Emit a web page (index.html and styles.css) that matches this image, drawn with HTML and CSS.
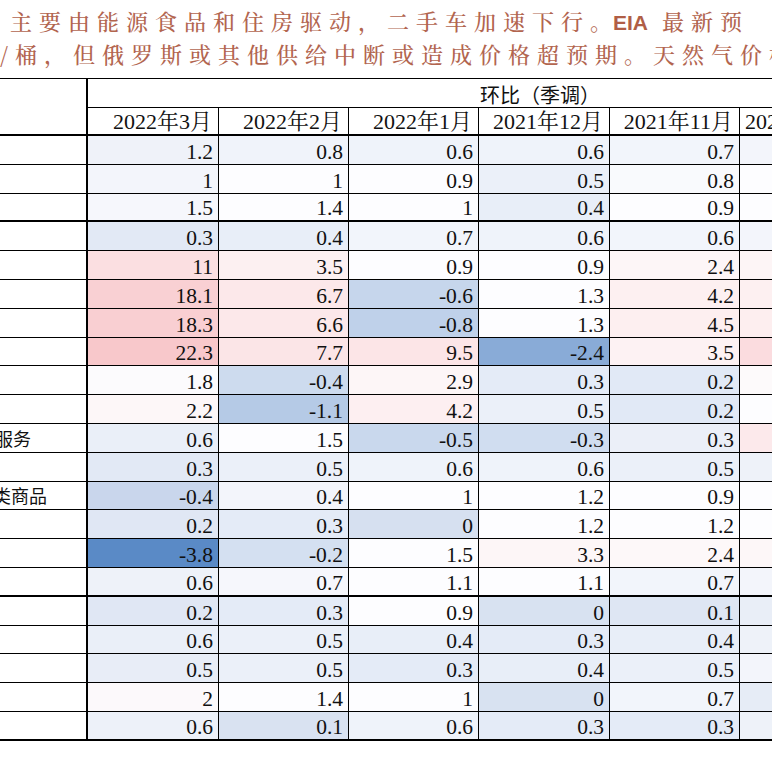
FILE: index.html
```html
<!DOCTYPE html>
<html lang="zh-CN">
<head>
<meta charset="utf-8">
<title>CPI 环比（季调）</title>
<link rel="stylesheet" href="styles.css">
</head>
<body>
<div class="title">
  <div class="l1">主要由能源食品和住房驱动，二手车加速下行。<span class="eia">EIA</span>最新预</div>
  <div class="l2">/桶，但俄罗斯或其他供给中断或造成价格超预期。天然气价格</div>
</div>
<div class="sheet">
  <div class="grid">
    <div class="row">
      <div class="c lab corner"></div>
      <div class="c hd span">环比（季调）</div>
    </div>
    <div class="row thick">
      <div class="c hd">2022年3月</div>
      <div class="c hd">2022年2月</div>
      <div class="c hd">2022年1月</div>
      <div class="c hd">2021年12月</div>
      <div class="c hd">2021年11月</div>
      <div class="c hd">2021年10月</div>
    </div>

    <div class="row">
      <div class="c lab"></div>
      <div class="c" style="background:#eff2f9">1.2</div>
      <div class="c" style="background:#f0f3fa">0.8</div>
      <div class="c" style="background:#eff3fa">0.6</div>
      <div class="c" style="background:#eff3fa">0.6</div>
      <div class="c" style="background:#f2f5fb">0.7</div>
      <div class="c" style="background:#f3f5fb"></div>
    </div>
    <div class="row">
      <div class="c lab"></div>
      <div class="c" style="background:#f3f5fb">1</div>
      <div class="c" style="background:#fdfdff">1</div>
      <div class="c" style="background:#fdfdff">0.9</div>
      <div class="c" style="background:#ebf0f9">0.5</div>
      <div class="c" style="background:#f9fafd">0.8</div>
      <div class="c" style="background:#fdfdff"></div>
    </div>
    <div class="row thick">
      <div class="c lab"></div>
      <div class="c" style="background:#f6f7fc">1.5</div>
      <div class="c" style="background:#fdfdff">1.4</div>
      <div class="c" style="background:#fdfdff">1</div>
      <div class="c" style="background:#e8eef8">0.4</div>
      <div class="c" style="background:#fdfdff">0.9</div>
      <div class="c" style="background:#fdfdff"></div>
    </div>
    <div class="row">
      <div class="c lab"></div>
      <div class="c" style="background:#e2e9f5">0.3</div>
      <div class="c" style="background:#e8eef8">0.4</div>
      <div class="c" style="background:#f2f5fb">0.7</div>
      <div class="c" style="background:#eff3fa">0.6</div>
      <div class="c" style="background:#f2f5fb">0.6</div>
      <div class="c" style="background:#f3f5fb"></div>
    </div>
    <div class="row">
      <div class="c lab"></div>
      <div class="c" style="background:#fbdfe1">11</div>
      <div class="c" style="background:#fcf0f1">3.5</div>
      <div class="c" style="background:#fdfdff">0.9</div>
      <div class="c" style="background:#fdfdff">0.9</div>
      <div class="c" style="background:#fdf6f7">2.4</div>
      <div class="c" style="background:#fdf5f6"></div>
    </div>
    <div class="row">
      <div class="c lab"></div>
      <div class="c" style="background:#f9d0d3">18.1</div>
      <div class="c" style="background:#fce8ea">6.7</div>
      <div class="c" style="background:#c6d6ec">-0.6</div>
      <div class="c" style="background:#fdfdff">1.3</div>
      <div class="c" style="background:#fdf0f1">4.2</div>
      <div class="c" style="background:#fdf0f1"></div>
    </div>
    <div class="row">
      <div class="c lab"></div>
      <div class="c" style="background:#f9cfd2">18.3</div>
      <div class="c" style="background:#fce8ea">6.6</div>
      <div class="c" style="background:#bfd1ea">-0.8</div>
      <div class="c" style="background:#fdfdff">1.3</div>
      <div class="c" style="background:#fdeff0">4.5</div>
      <div class="c" style="background:#fdeeef"></div>
    </div>
    <div class="row">
      <div class="c lab"></div>
      <div class="c" style="background:#f8c8cb">22.3</div>
      <div class="c" style="background:#fbe5e7">7.7</div>
      <div class="c" style="background:#fce5e7">9.5</div>
      <div class="c" style="background:#89abd7">-2.4</div>
      <div class="c" style="background:#fdf2f3">3.5</div>
      <div class="c" style="background:#fbdcdf"></div>
    </div>
    <div class="row">
      <div class="c lab"></div>
      <div class="c" style="background:#fcfbfd">1.8</div>
      <div class="c" style="background:#cddbee">-0.4</div>
      <div class="c" style="background:#fdf6f7">2.9</div>
      <div class="c" style="background:#e4ebf7">0.3</div>
      <div class="c" style="background:#e1e9f6">0.2</div>
      <div class="c" style="background:#fdfafb"></div>
    </div>
    <div class="row">
      <div class="c lab"></div>
      <div class="c" style="background:#fdf7f8">2.2</div>
      <div class="c" style="background:#b5cae6">-1.1</div>
      <div class="c" style="background:#fdeff1">4.2</div>
      <div class="c" style="background:#ebf0f9">0.5</div>
      <div class="c" style="background:#e1e9f6">0.2</div>
      <div class="c" style="background:#fdfdff"></div>
    </div>
    <div class="row">
      <div class="c lab"><span class="cut1">服务</span></div>
      <div class="c" style="background:#eaeff8">0.6</div>
      <div class="c" style="background:#fdfdff">1.5</div>
      <div class="c" style="background:#c9d8ed">-0.5</div>
      <div class="c" style="background:#d0ddf0">-0.3</div>
      <div class="c" style="background:#ebeff8">0.3</div>
      <div class="c" style="background:#fce9eb"></div>
    </div>
    <div class="row">
      <div class="c lab"></div>
      <div class="c" style="background:#e2e9f5">0.3</div>
      <div class="c" style="background:#ebf0f9">0.5</div>
      <div class="c" style="background:#eff3fa">0.6</div>
      <div class="c" style="background:#eff3fa">0.6</div>
      <div class="c" style="background:#ebf0f9">0.5</div>
      <div class="c" style="background:#eef2f9"></div>
    </div>
    <div class="row">
      <div class="c lab"><span class="cut2">类商品</span></div>
      <div class="c" style="background:#c9d6ec">-0.4</div>
      <div class="c" style="background:#f3f5fb">0.4</div>
      <div class="c" style="background:#fdfdff">1</div>
      <div class="c" style="background:#fdfdff">1.2</div>
      <div class="c" style="background:#fdfdff">0.9</div>
      <div class="c" style="background:#fdfdff"></div>
    </div>
    <div class="row">
      <div class="c lab"></div>
      <div class="c" style="background:#e0e7f4">0.2</div>
      <div class="c" style="background:#e4ebf7">0.3</div>
      <div class="c" style="background:#d6e0f0">0</div>
      <div class="c" style="background:#fdfdff">1.2</div>
      <div class="c" style="background:#fdfdff">1.2</div>
      <div class="c" style="background:#fdfdff"></div>
    </div>
    <div class="row">
      <div class="c lab"></div>
      <div class="c" style="background:#5a8ac6">-3.8</div>
      <div class="c" style="background:#d4e0f1">-0.2</div>
      <div class="c" style="background:#fdfdff">1.5</div>
      <div class="c" style="background:#fdf6f7">3.3</div>
      <div class="c" style="background:#fdf8f9">2.4</div>
      <div class="c" style="background:#fdf7f8"></div>
    </div>
    <div class="row thick">
      <div class="c lab"></div>
      <div class="c" style="background:#eef2f9">0.6</div>
      <div class="c" style="background:#f6f7fc">0.7</div>
      <div class="c" style="background:#fdfdff">1.1</div>
      <div class="c" style="background:#fdfdff">1.1</div>
      <div class="c" style="background:#f2f5fb">0.7</div>
      <div class="c" style="background:#f3f5fb"></div>
    </div>
    <div class="row">
      <div class="c lab"></div>
      <div class="c" style="background:#e0e7f4">0.2</div>
      <div class="c" style="background:#e4ebf7">0.3</div>
      <div class="c" style="background:#fdfdff">0.9</div>
      <div class="c" style="background:#d8e2f1">0</div>
      <div class="c" style="background:#dee6f3">0.1</div>
      <div class="c" style="background:#e9eef7"></div>
    </div>
    <div class="row">
      <div class="c lab"></div>
      <div class="c" style="background:#eaeff8">0.6</div>
      <div class="c" style="background:#ebf0f9">0.5</div>
      <div class="c" style="background:#e8eef8">0.4</div>
      <div class="c" style="background:#e4ebf7">0.3</div>
      <div class="c" style="background:#e8eef8">0.4</div>
      <div class="c" style="background:#eef2f9"></div>
    </div>
    <div class="row">
      <div class="c lab"></div>
      <div class="c" style="background:#e8edf7">0.5</div>
      <div class="c" style="background:#ebf0f9">0.5</div>
      <div class="c" style="background:#e4ebf7">0.3</div>
      <div class="c" style="background:#e8eef8">0.4</div>
      <div class="c" style="background:#ebf0f9">0.5</div>
      <div class="c" style="background:#f3f5fb"></div>
    </div>
    <div class="row">
      <div class="c lab"></div>
      <div class="c" style="background:#fcf9fb">2</div>
      <div class="c" style="background:#fdfdff">1.4</div>
      <div class="c" style="background:#fdfdff">1</div>
      <div class="c" style="background:#d8e2f1">0</div>
      <div class="c" style="background:#f2f5fb">0.7</div>
      <div class="c" style="background:#e6ecf6"></div>
    </div>
    <div class="row thick">
      <div class="c lab"></div>
      <div class="c" style="background:#edf1f9">0.6</div>
      <div class="c" style="background:#d9e2f1">0.1</div>
      <div class="c" style="background:#eff3fa">0.6</div>
      <div class="c" style="background:#e4ebf7">0.3</div>
      <div class="c" style="background:#e4ebf7">0.3</div>
      <div class="c" style="background:#eef2f9"></div>
    </div>
  </div>
</div>
</body>
</html>
```

FILE: styles.css
```css
* {
  box-sizing: border-box;
}

html,
body {
  margin: 0;
  padding: 0;
  background: #ffffff;
}

body {
  width: 772px;
  height: 772px;
  overflow: hidden;
}

.title {
  height: 78px;
  padding-top: 5px;
  color: #b2654f;
  font-family: "Noto Serif CJK SC", "Noto Sans CJK SC", sans-serif;
  font-size: 22px;
  font-weight: 500;
  line-height: 31px;
  letter-spacing: 7px;
  white-space: nowrap;
  overflow: hidden;
}

.title .l1 {
  padding-left: 10px;
}

.eia {
  font-family: "Liberation Sans", Arial, sans-serif;
  font-weight: bold;
  font-size: 21px;
  letter-spacing: 0;
  color: #b05e46;
  margin: 0 14px 0 -6px;
}

.sheet {
  width: 772px;
  overflow: hidden;
}

.grid {
  display: grid;
  width: 862px;
  grid-template-columns: 88px 131px 130px 130px 131px 130px 122px;
  grid-template-rows: 29px 28px repeat(21, 28.8px);
  border-top: 1px solid #000;
}

.row {
  display: contents;
}

.c {
  display: flex;
  align-items: flex-end;
  justify-content: flex-end;
  padding: 0 5px 0 0;
  border-right: 1px solid #000;
  border-bottom: 1px solid #000;
  background: #ffffff;
  color: #111;
  font-family: "Liberation Serif", "Times New Roman", serif;
  font-size: 21.5px;
  line-height: 24px;
  white-space: nowrap;
  overflow: hidden;
}

.thick > .c {
  border-bottom-width: 2px;
}

.c.lab {
  border-right-width: 2px;
  justify-content: flex-start;
  align-items: center;
  padding: 0;
  font-family: "Noto Sans CJK SC", sans-serif;
  font-size: 18px;
  color: #111;
}

.c.corner {
  grid-row: span 2;
  border-bottom-width: 2px;
}

.c.hd {
  padding-right: 6px;
  font-family: "Liberation Serif", "Noto Serif CJK SC", "Noto Sans CJK SC", serif;
  font-size: 22px;
}

.c.span {
  grid-column: 2 / -1;
  justify-content: flex-start;
  padding-left: 392px;
  border-right: none;
  font-family: "Noto Sans CJK SC", sans-serif;
  font-size: 20px;
}

.cut1 {
  margin-left: -5px;
}

.cut2 {
  margin-left: -7px;
}
```
